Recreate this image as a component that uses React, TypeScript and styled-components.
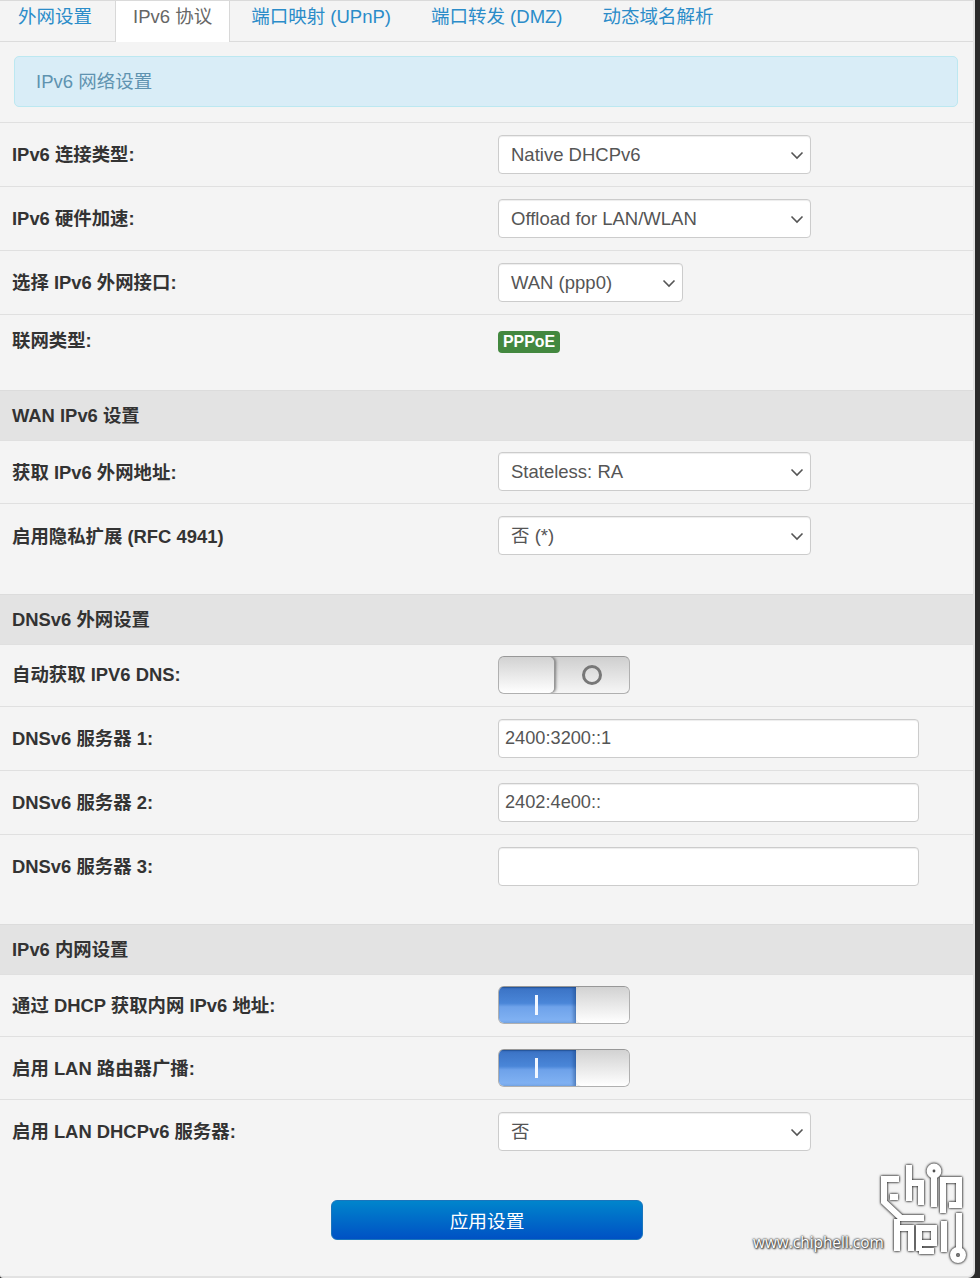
import React from 'react';
import styled, { createGlobalStyle } from 'styled-components';

const Global = createGlobalStyle`
  html, body { margin: 0; padding: 0; background: #2b2b2b; }
  body { width: 980px; height: 1278px; overflow: hidden; font-family: "Liberation Sans", "Noto Sans CJK SC", sans-serif; }
`;
const Panel = styled.div`
  position: relative; width: 975px; height: 1278px; background: #f4f4f4; box-sizing: border-box;
  border-right: 2px solid #e2e2e2; border-bottom: 2px solid #e2e2e2;
  border-bottom-right-radius: 7px; border-bottom-left-radius: 3px;
`;
const Tabs = styled.div`
  display: flex; gap: 5px; height: 41px; box-sizing: content-box;
  border-bottom: 1px solid #dcdcdc; box-shadow: inset 0 1px 0 #dadada;
`;
const Tab = styled.a<{ $active?: boolean; $shift?: number }>`
  display: block; height: ${p => (p.$active ? 41 : 40)}px; margin-top: 1px; line-height: 32px; box-sizing: border-box;
  padding: 0 ${p => (p.$active ? 17 : 18)}px; font-size: 18.5px; margin-left: ${p => p.$shift ?? 0}px; white-space: nowrap;
  color: ${p => (p.$active ? '#666' : '#2b8cc9')};
  background: ${p => (p.$active ? '#fff' : 'transparent')};
  border-left: ${p => (p.$active ? '1px solid #d8d8d8' : '0')};
  border-right: ${p => (p.$active ? '1px solid #d8d8d8' : '0')};
`;
const Alert = styled.div`
  margin: 14px 15px 15px 14px; height: 51px; box-sizing: border-box; padding-left: 21px;
  background: #d9edf7; border: 1px solid #bce8f1; border-radius: 5px;
  color: #5f93b0; font-size: 18.5px; line-height: 50px;
`;
const Row = styled.div<{ $h: number; $pad?: number }>`
  height: ${p => p.$h}px; box-sizing: border-box; display: flex; padding-left: 12px;
  border-top: 1px solid #e0e0e0; align-items: flex-start; padding-top: ${p => p.$pad ?? 12}px;
`;
const Label = styled.div<{ $lh?: number }>`
  width: 486px; flex: none; font-weight: 700; font-size: 18.4px; line-height: ${p => p.$lh ?? 40}px; color: #333; white-space: nowrap;
`;
const Section = styled.div<{ $mt: number }>`
  height: 50px; box-sizing: border-box; background: #e3e3e3; border-top: 1px solid #dcdcdc; padding-left: 12px; margin-top: ${p => p.$mt}px;
  font-weight: 700; font-size: 18.4px; line-height: 50px; color: #333;
`;
const Field = styled.div<{ $w: number }>`
  position: relative; width: ${p => p.$w}px; height: 39px; box-sizing: border-box;
  background: #fff; border: 1px solid #ccc; border-radius: 4px;
  box-shadow: inset 0 1px 1px rgba(0,0,0,.075);
  font-size: 18.5px; line-height: 37px; color: #555; padding-left: 12px;
`;
const Chevron = styled.svg`
  position: absolute; right: 6px; top: 12px; width: 14px; height: 14px;
  fill: none; stroke: #555; stroke-width: 1.6;
`;
const TextInput = styled(Field)`
  padding-left: 6px; font-size: 18.2px;
`;
const Badge = styled.span`
  display: inline-block; background: #43883f; color: #fff; font-weight: 700; font-size: 15.9px;
  line-height: 21px; height: 22px; padding: 0 5px; border-radius: 4px; margin-top: 4px;
`;
const Switch = styled.div`
  position: relative; display: flex; width: 132px; height: 38px; box-sizing: border-box;
  border-radius: 6px; border: 1px solid #b0b0b0; border-top-color: #989898; overflow: hidden;
  background: linear-gradient(#cfcfcf, #f6f6f6);
`;
const Knob = styled.div<{ $w: number }>`
  width: ${p => p.$w}px; flex: none; box-sizing: border-box;
  background: linear-gradient(#d2d2d2, #ffffff);
  border-radius: 5px; box-shadow: 1px 0 1px #999, 2px 0 3px rgba(0,0,0,.45);
`;
const OffSide = styled.div`
  flex: 1; display: flex; align-items: center; justify-content: center;
`;
const Ring = styled.div`
  width: 14px; height: 14px; border: 3px solid #777; border-radius: 50%;
`;
const OnSide = styled.div`
  width: 77px; flex: none; box-sizing: border-box; padding-right: 2px; display: flex; align-items: center; justify-content: center;
  background: linear-gradient(#3a72c4 0%, #4a86d8 45%, #6ea2ea 55%, #83b4f4 100%);
  box-shadow: inset -3px 0 3px rgba(20,60,120,.35), inset 0 1px 1px #2a5aa0;
`;
const Bar = styled.div`
  width: 3px; height: 20px; background: #f2f7ff;
`;
const Footer = styled.div`
  display: flex; padding: 48px 0 0 331px;
`;
const Apply = styled.button`
  width: 312px; height: 40px; padding: 0 0 2px; border: 1px solid #1a75bc; border-radius: 6px;
  background: linear-gradient(#0085cc, #0051c4); color: #fff; font: 18.7px "Liberation Sans", "Noto Sans CJK SC", sans-serif;
`;
const Mark = styled.div`
  position: absolute; left: 753px; top: 1155px; display: flex; align-items: flex-start;
`;
const MarkText = styled.span`
  font-family: "Open Sans", sans-serif; font-size: 15.4px; line-height: 20px; color: #fff; margin-top: 78px; white-space: nowrap;
  text-shadow: 0 0 2px #333, 0 0 2px #333, 1px 1px 2px #333;
`;
const Logo = styled.svg`
  flex: none; width: 100px; height: 110px; margin-left: -15px; fill: none; stroke: #fff; stroke-width: 6;
  filter: drop-shadow(0.5px 0.5px 1px #333) drop-shadow(0 0 1.2px #555);
`;

const Select = ({ w, children }: { w: number; children: React.ReactNode }) => (
  <Field $w={w}>
    {children}
    <Chevron viewBox="0 0 14 14"><path d="M1.5 4.5 7 10l5.5-5.5" /></Chevron>
  </Field>
);
const SwitchOff = () => (
  <Switch><Knob $w={55} /><OffSide><Ring /></OffSide></Switch>
);
const SwitchOn = () => (
  <Switch><OnSide><Bar /></OnSide><Knob $w={55} /></Switch>
);

export default function App() {
  return (
    <Panel>
      <Global />
      <Tabs>
        <Tab>外网设置</Tab>
        <Tab $active>IPv6 协议</Tab>
        <Tab $shift={-2}>端口映射 (UPnP)</Tab>
        <Tab $shift={-1}>端口转发 (DMZ)</Tab>
        <Tab $shift={-1}>动态域名解析</Tab>
      </Tabs>
      <Alert>IPv6 网络设置</Alert>
      <Row $h={64}><Label>IPv6 连接类型:</Label><Select w={313}>Native DHCPv6</Select></Row>
      <Row $h={64}><Label>IPv6 硬件加速:</Label><Select w={313}>Offload for LAN/WLAN</Select></Row>
      <Row $h={64}><Label>选择 IPv6 外网接口:</Label><Select w={185}>WAN (ppp0)</Select></Row>
      <Row $h={26}><Label $lh={28}>联网类型:</Label><Badge>PPPoE</Badge></Row>
      <Section $mt={50}>WAN IPv6 设置</Section>
      <Row $h={63} $pad={11}><Label $lh={42}>获取 IPv6 外网地址:</Label><Select w={313}>Stateless: RA</Select></Row>
      <Row $h={41}><Label $lh={42}>启用隐私扩展 (RFC 4941)</Label><Select w={313}>否 (*)</Select></Row>
      <Section $mt={50}>DNSv6 外网设置</Section>
      <Row $h={62} $pad={11}><Label $lh={38}>自动获取 IPV6 DNS:</Label><SwitchOff /></Row>
      <Row $h={64}><Label>DNSv6 服务器 1:</Label><TextInput $w={421}>2400:3200::1</TextInput></Row>
      <Row $h={64}><Label>DNSv6 服务器 2:</Label><TextInput $w={421}>2402:4e00::</TextInput></Row>
      <Row $h={40}><Label>DNSv6 服务器 3:</Label><TextInput $w={421} /></Row>
      <Section $mt={50}>IPv6 内网设置</Section>
      <Row $h={62} $pad={11}><Label>通过 DHCP 获取内网 IPv6 地址:</Label><SwitchOn /></Row>
      <Row $h={63}><Label>启用 LAN 路由器广播:</Label><SwitchOn /></Row>
      <Row $h={53}><Label>启用 LAN DHCPv6 服务器:</Label><Select w={313}>否</Select></Row>
      <Footer><Apply>应用设置</Apply></Footer>
      <Mark>
        <MarkText>www.chiphell.com</MarkText>
        <Logo viewBox="0 0 100 110">
          <path d="M30 24H15V47L32 63H55" />
          <path d="M29 42H21" />
          <path d="M40 10V46M40 28H52V50" />
          <path d="M65 22V52" />
          <circle cx="65" cy="16" r="4.4" />
          <path d="M74 58V25H90V50H80" />
          <path d="M28 64V96M28 73H42V96" />
          <path d="M50 96V73H65V88H50M50 96H65" />
          <path d="M75 66V97" />
          <path d="M90 58V94" />
          <circle cx="89" cy="100" r="5" />
        </Logo>
      </Mark>
    </Panel>
  );
}
